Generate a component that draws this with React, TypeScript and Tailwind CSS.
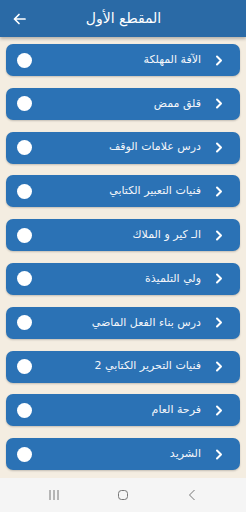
import React from "react";

const items = [
  "الآفة المهلكة",
  "قلق ممض",
  "درس علامات الوقف",
  "فنيات التعبير الكتابي",
  "الـ كير و الملاك",
  "ولي التلميذة",
  "درس بناء الفعل الماضي",
  "فنيات التحرير الكتابي 2",
  "فرحة العام",
  "الشريد",
];

export default function App() {
  return (
    <div
      className="w-[246px] h-[512px] bg-[#f4ede1] flex flex-col overflow-hidden"
      style={{ fontFamily: '"DejaVu Sans", "Noto Sans", sans-serif' }}
    >
      <div className="h-[37px] bg-[#2a6aa6] shadow-[0_2px_3px_rgba(0,0,0,0.25)] flex items-center px-[13px] relative z-10 shrink-0">
        <svg width="13" height="12" viewBox="0 0 13 12" fill="none" stroke="white" strokeWidth="1.7" strokeLinecap="round" strokeLinejoin="round">
          <path d="M12 6H1.5M6 1.5L1.5 6L6 10.5" />
        </svg>
        <div dir="rtl" className="flex-1 text-center text-white text-[14px] pr-[4px] mr-[8px]">
          المقطع الأول
        </div>
      </div>
      <div className="flex-1 flex flex-col gap-[11.8px] pt-[7px] px-[6px]">
        {items.map((t) => (
          <div
            key={t}
            className="h-[32px] shrink-0 rounded-[7px] bg-[#2b72b5] shadow-[0_1px_2px_rgba(0,0,0,0.2)] flex items-center pl-[11px] pr-[17px]"
          >
            <div className="w-[15px] h-[15px] rounded-full bg-white" />
            <div dir="rtl" className="flex-1 text-[#f4f6fa] text-[11px] pl-[12px] mr-[14px] text-right">
              {t}
            </div>
            <svg width="8" height="11" viewBox="0 0 8 11" fill="none" stroke="white" strokeWidth="2" strokeLinecap="round" strokeLinejoin="round">
              <path d="M2 1.5L6 5.5L2 9.5" />
            </svg>
          </div>
        ))}
      </div>
      <div className="h-[34px] bg-[#f5f5f5] flex items-center justify-center gap-[49px] shrink-0">
        <div className="w-[20px] flex justify-center">
          <svg width="12" height="12" viewBox="0 0 12 12" stroke="#777" strokeWidth="1">
            <path d="M2 1V11M6 1V11M10 1V11" />
          </svg>
        </div>
        <div className="w-[20px] flex justify-center">
          <svg width="12" height="12" viewBox="0 0 12 12" fill="none" stroke="#777" strokeWidth="1">
            <rect x="1.5" y="1.5" width="9" height="9" rx="3" />
          </svg>
        </div>
        <div className="w-[20px] flex justify-center">
          <svg width="8" height="12" viewBox="0 0 8 12" fill="none" stroke="#777" strokeWidth="1">
            <path d="M6.5 1L1.5 6L6.5 11" />
          </svg>
        </div>
      </div>
    </div>
  );
}
